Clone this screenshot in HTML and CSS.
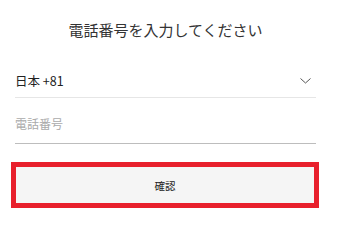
FILE: index.html
```html
<!DOCTYPE html>
<html lang="ja">
<head>
    <meta charset="UTF-8">
    <meta name="viewport" content="width=device-width, initial-scale=1.0">
    <title>電話番号を入力してください</title>
    <link rel="stylesheet" href="styles.css">
</head>
<body>
    <div class="container">
        <h1 class="title">電話番号を入力してください</h1>
        <div class="field country-field">
            <span class="country">日本 +81</span>
            <svg class="chevron" width="11" height="6" viewBox="0 0 11 6">
                <path d="M0.5 0.5 L5.5 5 L10.5 0.5" fill="none" stroke="#555" stroke-width="1"/>
            </svg>
        </div>
        <div class="field phone-field">
            <input class="phone-input" type="tel" placeholder="電話番号">
        </div>
        <button class="confirm-button">確認</button>
    </div>
</body>
</html>
```

FILE: styles.css
```css
body {
    margin: 0;
    background: #fff;
    font-family: "Noto Sans CJK JP", "Noto Sans", sans-serif;
    color: #222;
}

.container {
    width: 301px;
    margin-left: 15px;
    padding-top: 15px;
}

.title {
    margin: 0;
    height: 30px;
    line-height: 30px;
    font-size: 15px;
    font-weight: normal;
    text-align: center;
    color: #333;
}

.field {
    display: flex;
    align-items: center;
    justify-content: space-between;
}

.country-field {
    margin-top: 26px;
    padding-bottom: 6px;
    border-bottom: 1px solid #e6e6e6;
}

.country {
    font-size: 12.5px;
    line-height: 20px;
}

.chevron {
    margin-right: 5px;
}

.phone-field {
    padding-top: 15px;
    padding-bottom: 10px;
    border-bottom: 1px solid #bdbdbd;
}

.phone-input {
    width: 100%;
    height: 20px;
    padding: 0;
    border: none;
    outline: none;
    font-family: inherit;
    font-size: 12px;
    background: transparent;
}

.phone-input::placeholder {
    color: #aaa;
}

.confirm-button {
    display: block;
    margin-top: 18px;
    margin-left: -4px;
    width: 308px;
    height: 46px;
    border: 5px solid #e8202c;
    background: #f5f5f5;
    font-family: inherit;
    font-size: 10.5px;
    color: #222;
    cursor: pointer;
}
```
